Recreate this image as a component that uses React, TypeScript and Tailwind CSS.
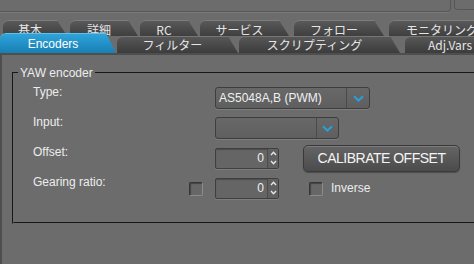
import React from "react";

const sans = "font-['Liberation_Sans','Noto_Sans_CJK_JP',sans-serif]";
const cjk = "font-['Noto_Sans_CJK_JP','Liberation_Sans',sans-serif]";

function BackTab({ label, className }: { label: string; className: string }) {
  return (
    <div
      className={`relative shrink-0 h-full rounded-tl-[6px] border-t border-[#7c7c7c] bg-gradient-to-b from-[#595959] to-[#3f3f3f] [clip-path:polygon(0_0,calc(100%_-_10px)_0,100%_100%,0_100%)] flex items-center pt-[2px] pr-[10px] ${className}`}
    >
      <span className={`w-full text-center text-[12px] leading-[14px] text-[#e6e6e6] ${cjk}`}>{label}</span>
    </div>
  );
}

function FrontTab({ label, className, active = false }: { label: string; className: string; active?: boolean }) {
  return (
    <div
      className={`relative shrink-0 rounded-tl-[6px] border-t [clip-path:polygon(0_0,calc(100%_-_10px)_0,100%_100%,0_100%)] flex items-center pr-[10px] ${
        active
          ? "z-10 -mt-[3px] h-[20px] border-[#5ec0ee] bg-gradient-to-b from-[#2ea3da] to-[#1780b5]"
          : "h-full border-[#767676] bg-gradient-to-b from-[#575757] to-[#3c3c3c]"
      } ${className}`}
    >
      <span
        className={`w-full text-center text-[12px] leading-[14px] ${active ? `text-white ${sans} text-[12.5px]` : `text-[#e6e6e6] ${cjk}`}`}
      >
        {label}
      </span>
    </div>
  );
}

function Chevron() {
  return (
    <svg width="11" height="7" viewBox="0 0 11 7">
      <path d="M1 1.2 L5.5 5.5 L10 1.2" fill="none" stroke="#2a9fd8" strokeWidth="2" />
    </svg>
  );
}

function Combo({ text, className, arrowW }: { text?: string; className: string; arrowW: string }) {
  return (
    <div
      className={`flex h-[22px] rounded-[3px] border border-[#3e3e3e] bg-gradient-to-b from-[#686868] to-[#5f5f5f] shadow-[0_1px_0_rgba(255,255,255,0.12)] ${className}`}
    >
      <div className={`flex-1 flex items-center pl-[3px] text-[12px] text-[#f0f0f0] ${sans}`}>{text}</div>
      <div className={`flex items-center justify-center border-l border-[#4a4a4a] ${arrowW}`}>
        <Chevron />
      </div>
    </div>
  );
}

function Spinner({ h }: { h: string }) {
  return (
    <div
      className={`flex w-[64px] ${h} rounded-[2px] border border-[#3f3f3f] bg-[#656565] shadow-[inset_0_1px_1px_rgba(0,0,0,0.25),0_1px_0_rgba(255,255,255,0.12)]`}
    >
      <div className={`flex-1 flex items-center justify-end pr-[3px] text-[12px] text-[#f0f0f0] ${sans}`}>0</div>
      <div className="w-[11px] flex flex-col items-center justify-around border-l border-[#4c4c4c] bg-[#606060]">
        <svg width="7" height="5" viewBox="0 0 7 5">
          <path d="M1 4 L3.5 1.3 L6 4" fill="none" stroke="#e6e6e6" strokeWidth="1.4" />
        </svg>
        <svg width="7" height="5" viewBox="0 0 7 5">
          <path d="M1 1 L3.5 3.7 L6 1" fill="none" stroke="#e6e6e6" strokeWidth="1.4" />
        </svg>
      </div>
    </div>
  );
}

function Check() {
  return (
    <div className="mt-[2px] h-[14px] w-[14px] rounded-[2px] border border-t-[#363636] border-l-[#363636] border-b-[#8c8c8c] border-r-[#8c8c8c] bg-[#676767] shadow-[inset_1px_1px_1px_rgba(0,0,0,0.35)]" />
  );
}

function Label({ children }: { children: React.ReactNode }) {
  return (
    <div className={`w-[156px] shrink-0 self-start mt-[2px] text-[12px] leading-[14px] text-[#ececec] ${sans}`}>
      {children}
    </div>
  );
}

export default function App() {
  return (
    <div className={`w-[474px] h-[264px] overflow-hidden bg-[#6c6c6c] flex flex-col ${sans}`}>
      {/* top strip */}
      <div className="flex h-[12px] shrink-0">
        <div className="w-[451px] rounded-br-[4px] border-b border-r border-[#575757] shadow-[0_1px_0_rgba(255,255,255,0.1)]" />
        <div className="ml-[3px] flex-1 rounded-bl-[4px] border-b border-l border-[#575757] -mt-[2px] mb-[2px]" />
      </div>

      {/* back row */}
      <div className="mt-[8px] flex h-[16px] shrink-0">
        <BackTab label="基本" className="ml-[3px] w-[64px]" />
        <BackTab label="詳細" className="ml-[3px] w-[68px]" />
        <BackTab label="RC" className="ml-[2px] w-[58px]" />
        <BackTab label="サービス" className="ml-[2px] w-[89px]" />
        <BackTab label="フォロー" className="ml-[5px] w-[90px]" />
        <BackTab label="モニタリング" className="ml-[5px] w-[116px]" />
      </div>

      {/* front row */}
      <div className="flex h-[17px] shrink-0">
        <FrontTab label="Encoders" active className="w-[116px]" />
        <FrontTab label="フィルター" className="ml-[1px] w-[121px]" />
        <FrontTab label="スクリプティング" className="ml-[1px] w-[161px]" />
        <FrontTab label="Adj.Vars" className="ml-[5px] w-[100px]" />
      </div>

      {/* tab pane */}
      <div className="flex-1 border-t-2 border-l-2 border-[#4e4e4e] overflow-hidden">
        <fieldset className="mt-[11px] ml-[10px] -mr-[20px] border-2 [border-style:groove] border-[#6c6c6c] pb-[19px]">
          <legend className={`ml-[4px] px-[2px] text-[12px] leading-[14px] text-[#ececec] ${sans}`}>YAW encoder</legend>
          <div className="pt-[3px] pl-[19px] flex flex-col">
            <div className="flex h-[30px] items-center">
              <Label>Type:</Label>
              <div className="w-[26px] shrink-0" />
              <Combo text="AS5048A,B (PWM)" className="w-[155px]" arrowW="w-[23px]" />
            </div>
            <div className="flex h-[30px] items-center">
              <Label>Input:</Label>
              <div className="w-[26px] shrink-0" />
              <Combo className="w-[124px]" arrowW="w-[22px]" />
            </div>
            <div className="flex h-[30px] items-center">
              <Label>Offset:</Label>
              <div className="w-[26px] shrink-0" />
              <Spinner h="h-[21px]" />
              <button
                className={`ml-[24px] h-[27px] w-[157px] rounded-[5px] border border-[#3a3a3a] bg-gradient-to-b from-[#656565] to-[#4b4b4b] shadow-[inset_0_1px_0_rgba(255,255,255,0.15),0_1px_1px_rgba(0,0,0,0.3)] text-[14px] tracking-[-0.5px] text-[#f4f4f4] ${sans}`}
              >
                CALIBRATE OFFSET
              </button>
            </div>
            <div className="flex h-[30px] items-center">
              <Label>Gearing ratio:</Label>
              <div className="w-[26px] shrink-0 flex items-center">
                <Check />
              </div>
              <Spinner h="h-[21px]" />
              <div className="ml-[30px]">
                <Check />
              </div>
              <span className={`ml-[8px] text-[12px] text-[#ececec] ${sans}`}>Inverse</span>
            </div>
          </div>
        </fieldset>
      </div>
    </div>
  );
}
